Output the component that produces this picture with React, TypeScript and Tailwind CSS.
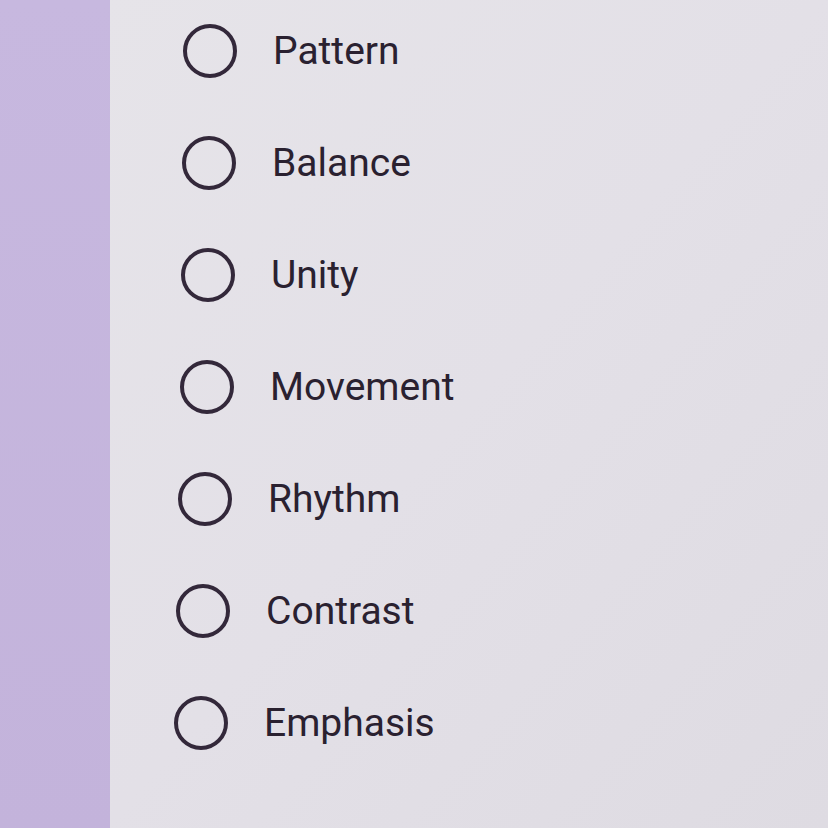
import React from "react";

const items = [
  { label: "Pattern", ml: "ml-[73px]" },
  { label: "Balance", ml: "ml-[72px]" },
  { label: "Unity", ml: "ml-[71px]" },
  { label: "Movement", ml: "ml-[70px]" },
  { label: "Rhythm", ml: "ml-[68px]" },
  { label: "Contrast", ml: "ml-[66px]" },
  { label: "Emphasis", ml: "ml-[64px]" },
];

export default function App() {
  return (
    <div
      className="flex w-[828px] h-[828px] overflow-hidden"
      style={{ fontFamily: "Roboto, 'Liberation Sans', sans-serif" }}
    >
      <div className="w-[110px] h-full bg-gradient-to-b from-[#c7b8df] to-[#c3b3db]" />
      <div className="flex-1 h-full bg-gradient-to-br from-[#e6e4e9] via-[#e3e0e7] to-[#dedbe2]">
        <div className="flex flex-col -mt-[5px]">
          {items.map((it) => (
            <div key={it.label} className={`flex items-center h-[112px] ${it.ml}`}>
              <div className="w-[54px] h-[54px] rounded-full border-[4.5px] border-[#33283a] shrink-0" />
              <span className="ml-[36px] text-[39px] leading-none text-[#2a2130]">
                {it.label}
              </span>
            </div>
          ))}
        </div>
      </div>
    </div>
  );
}
